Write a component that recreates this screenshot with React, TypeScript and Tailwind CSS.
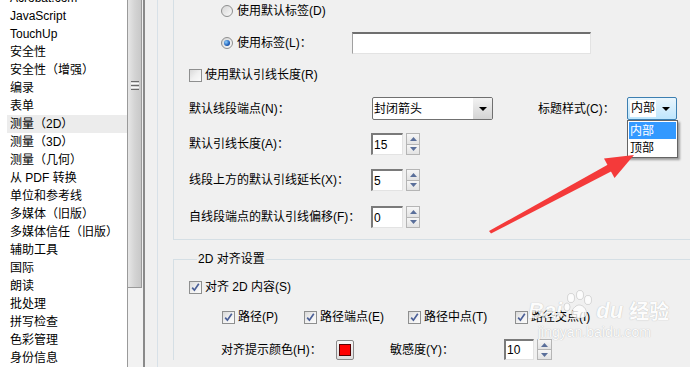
import React from "react";

const items = [
  "Acrobat.com",
  "JavaScript",
  "TouchUp",
  "安全性",
  "安全性（增强）",
  "编录",
  "表单",
  "测量（2D）",
  "测量（3D）",
  "测量（几何）",
  "从 PDF 转换",
  "单位和参考线",
  "多媒体（旧版）",
  "多媒体信任（旧版）",
  "辅助工具",
  "国际",
  "朗读",
  "批处理",
  "拼写检查",
  "色彩管理",
  "身份信息",
];

function Checkbox({ checked }: { checked?: boolean }) {
  return (
    <span className="relative flex h-[13px] w-[13px] shrink-0 items-center justify-center border border-[#8e8f8f] bg-gradient-to-br from-[#d9d9d9] via-[#f0f0f0] to-[#fbfbfb]">
      {checked && (
        <svg width="11" height="11" viewBox="0 0 11 11" className="absolute left-[0px] top-[0px]">
          <path d="M2.2 5.6 L4.4 8.2 L8.8 1.8" fill="none" stroke="#4a5f97" strokeWidth="1.7" />
        </svg>
      )}
    </span>
  );
}

function Radio({ checked }: { checked?: boolean }) {
  return (
    <span className="flex h-[12px] w-[12px] shrink-0 items-center justify-center rounded-full border border-[#8e8f8f] bg-gradient-to-br from-[#d6d6d6] to-[#fafafa]">
      {checked && (
        <span className="h-[6px] w-[6px] rounded-full bg-[radial-gradient(circle_at_35%_35%,#8fd0ff,#1f5fb8_60%,#17367a)]" />
      )}
    </span>
  );
}

function SpinButtons({ w = 14, h = 22 }: { w?: number; h?: number }) {
  const cls =
    "flex flex-1 items-center justify-center border border-[#b5b5b5] bg-gradient-to-b from-[#f6f6f6] to-[#e3e3e3]";
  return (
    <div className={h === 22 ? "ml-[3px] flex h-[22px] w-[14px] flex-col" : "ml-[3px] flex h-[21px] w-[15px] flex-col"}>
      <div className={cls}>
        <svg width="7" height="4" viewBox="0 0 7 4">
          <path d="M0 4 L3.5 0 L7 4 Z" fill="#5a6f9a" />
        </svg>
      </div>
      <div className={cls + " border-t-0"}>
        <svg width="7" height="4" viewBox="0 0 7 4">
          <path d="M0 0 L3.5 4 L7 0 Z" fill="#5a6f9a" />
        </svg>
      </div>
    </div>
  );
}

function SpinInput({ value, wide }: { value: string; wide?: boolean }) {
  return (
    <div className="flex items-center">
      <div
        className={
          (wide ? "h-[21px] w-[30px]" : "h-[22px] w-[32px]") +
          " flex items-center border-l-2 border-t-2 border-r border-b border-l-[#7a7a7a] border-t-[#7a7a7a] border-r-[#e3e3e3] border-b-[#e3e3e3] bg-white pl-[1px] text-[12px] leading-none text-black"
        }
      >
        {value}
      </div>
      <SpinButtons h={wide ? 21 : 22} />
    </div>
  );
}

function Arrow() {
  return (
    <svg width="8" height="4" viewBox="0 0 8 4">
      <path d="M0 0 L8 0 L4 4 Z" fill="#000" />
    </svg>
  );
}

export default function App() {
  return (
    <div className="relative flex h-[367px] w-[690px] overflow-hidden bg-[#f0f0f0] font-['Liberation_Sans','Noto_Sans_CJK_SC',sans-serif] text-[12px] text-black">
      {/* Left list */}
      <div className="w-[127px] shrink-0 bg-white">
        <div className="mt-[-11px] flex flex-col">
          {items.map((t) => (
            <div
              key={t}
              className={
                "ml-[7px] flex h-[18px] items-center whitespace-nowrap pl-[3px] leading-none " +
                (t === "测量（2D）" ? "bg-[#ececec]" : "")
              }
            >
              {t}
            </div>
          ))}
        </div>
      </div>

      {/* Scrollbar */}
      <div className="flex w-[18px] shrink-0 border-l border-[#9a9a9a]">
        <div className="flex w-[15px] flex-col">
          <div className="relative h-[288px] w-[14px] border-r border-b border-[#9a9a9a] bg-gradient-to-r from-[#e6e6e6] via-[#d4d4d4] to-[#c8c8c8]">
            <div className="absolute left-[3px] top-[81px] flex w-[8px] flex-col gap-[1px]">
              <div className="h-[1px] bg-[#6a6a6a]" />
              <div className="h-[1px] bg-[#f8f8f8]" />
              <div className="h-[1px] bg-[#6a6a6a]" />
              <div className="h-[1px] bg-[#f8f8f8]" />
              <div className="h-[1px] bg-[#6a6a6a]" />
            </div>
          </div>
          <div className="flex-1 bg-[#f2f2f2]" />
        </div>
        <div className="w-[2px] bg-[#8a8a8a]" />
      </div>

      {/* Panel */}
      <div className="flex flex-1 pl-[12px]">
        <div className="flex flex-1 flex-col border-l border-[#d8e1e8] pl-[15px]">
          {/* upper group */}
          <div className="flex h-[240px] flex-col border-l border-b border-[#d5dfe5] pl-[15px]">
            <div className="ml-[32px] flex h-[22px] items-center">
              <Radio />
              <span className="ml-[4px]">使用默认标签(D)</span>
            </div>
            <div className="mt-[10px] flex h-[22px] items-center">
              <div className="ml-[32px] flex w-[131px] items-center">
                <Radio checked />
                <span className="ml-[4px]">使用标签(L)：</span>
              </div>
              <div className="h-[22px] w-[239px] border-t-2 border-l border-r border-b border-t-[#6f6f6f] border-l-[#a0a0a0] border-r-[#e3e3e3] border-b-[#e3e3e3] bg-white" />
            </div>
            <div className="mt-[10px] flex h-[22px] items-center">
              <Checkbox />
              <span className="ml-[3px]">使用默认引线长度(R)</span>
            </div>
            <div className="mt-[11px] flex h-[23px] items-center">
              <span className="w-[183px]">默认线段端点(N)：</span>
              <div className="flex h-[23px] w-[121px] items-center overflow-hidden rounded-[2px] border border-[#707070] bg-white">
                <span className="flex-1 pl-[1px]">封闭箭头</span>
                <div className="flex h-full w-[19px] items-center justify-center bg-gradient-to-b from-[#f2f2f2] to-[#d4d4d4]">
                  <Arrow />
                </div>
              </div>
              <span className="ml-[45px] w-[89px]">标题样式(C)：</span>
              <div className="flex h-[23px] w-[50px] items-center overflow-hidden rounded-[2px] border border-[#3c7fb1] bg-gradient-to-b from-[#eaf6fd] to-[#bee6fd] pl-[2px]">
                <span className="bg-white px-[1px] leading-[17px]">内部</span>
                <div className="flex flex-1 items-center justify-center">
                  <Arrow />
                </div>
              </div>
            </div>
            {[
              ["默认引线长度(A)：", "15", "mt-[13px]"],
              ["线段上方的默认引线延长(X)：", "5", "mt-[14px]"],
              ["自线段端点的默认引线偏移(F)：", "0", "mt-[15px]"],
            ].map(([label, v, mt]) => (
              <div key={label} className={mt + " flex h-[22px] items-center"}>
                <span className="w-[182px]">{label}</span>
                <SpinInput value={v} />
              </div>
            ))}
          </div>

          {/* lower group */}
          <fieldset className="mt-[12px] w-[600px] border-t border-l border-[#d5dfe5] pl-[15px]">
            <legend className="ml-[8px] px-[1px] leading-[14px]">2D 对齐设置</legend>
            <div className="mt-[10px] flex h-[22px] items-center">
              <Checkbox checked />
              <span className="ml-[3px]">对齐 2D 内容(S)</span>
            </div>
            <div className="ml-[33px] mt-[8px] flex h-[22px] items-center">
              {[
                ["路径(P)", "w-[82px]"],
                ["路径端点(E)", "w-[104px]"],
                ["路径中点(T)", "w-[107px]"],
                ["路径交点(I)", "w-[100px]"],
              ].map(([t, w]) => (
                <div key={t} className={w + " flex items-center"}>
                  <Checkbox checked />
                  <span className="ml-[3px]">{t}</span>
                </div>
              ))}
            </div>
            <div className="ml-[32px] mt-[11px] flex h-[21px] items-center">
              <span className="w-[115px]">对齐提示颜色(H)：</span>
              <div className="flex h-[20px] w-[18px] items-center justify-center rounded-[2px] border border-[#8a8a8a] bg-gradient-to-b from-[#f6f6f6] to-[#dedede]">
                <div className="h-[12px] w-[12px] border border-[#5a0000] bg-[#ff0000]" />
              </div>
              <span className="ml-[36px] w-[114px]">敏感度(Y)：</span>
              <SpinInput value="10" wide />
            </div>
          </fieldset>
        </div>
      </div>

      {/* Dropdown list overlay */}
      <div className="absolute left-[627px] top-[120px] flex h-[38px] w-[51px] flex-col border border-[#646464] bg-white p-[1px] shadow-[2px_2px_2px_rgba(0,0,0,0.35)]">
        <div className="flex h-[17px] items-center bg-[#3399ff] pl-[1px] text-white">内部</div>
        <div className="flex h-[17px] items-center pl-[1px]">顶部</div>
      </div>

      {/* Red arrow */}
      <svg className="pointer-events-none absolute left-0 top-0" width="690" height="367" viewBox="0 0 690 367">
        <polygon points="489,231 491,233.5 612,171 609,164" fill="#f43a3a" />
        <polygon points="634,155 604,158.5 614.5,178" fill="#f43a3a" />
      </svg>

      {/* Watermark */}
      <div className="pointer-events-none absolute left-[528px] top-[290px] flex flex-col items-start text-white opacity-80">
        <div className="flex items-end">
          <span className="text-[22px] font-bold italic leading-none [text-shadow:0_0_1px_rgba(0,0,0,0.35)]">Bai</span>
          <svg width="34" height="30" viewBox="0 0 34 30" className="mb-[2px]">
            <g fill="#ffffff" stroke="rgba(0,0,0,0.2)" strokeWidth="0.8">
              <ellipse cx="9" cy="8" rx="3.5" ry="4.5" />
              <ellipse cx="18" cy="5" rx="3.5" ry="4.5" />
              <ellipse cx="26" cy="10" rx="3.5" ry="4.5" />
              <ellipse cx="5" cy="17" rx="3" ry="4" />
              <path d="M10 26 C8 20 14 15 17 15 C22 15 26 21 24 26 C22 29 12 29 10 26 Z" />
            </g>
          </svg>
          <span className="text-[22px] font-bold italic leading-none [text-shadow:0_0_1px_rgba(0,0,0,0.35)]">du</span>
          <span className="ml-[6px] text-[20px] font-bold leading-none [text-shadow:0_0_1px_rgba(0,0,0,0.35)]">经验</span>
        </div>
        <span className="ml-[10px] mt-[3px] text-[14px] leading-none [text-shadow:0_0_1px_rgba(0,0,0,0.35)]">jingyan.baidu.com</span>
      </div>
    </div>
  );
}
